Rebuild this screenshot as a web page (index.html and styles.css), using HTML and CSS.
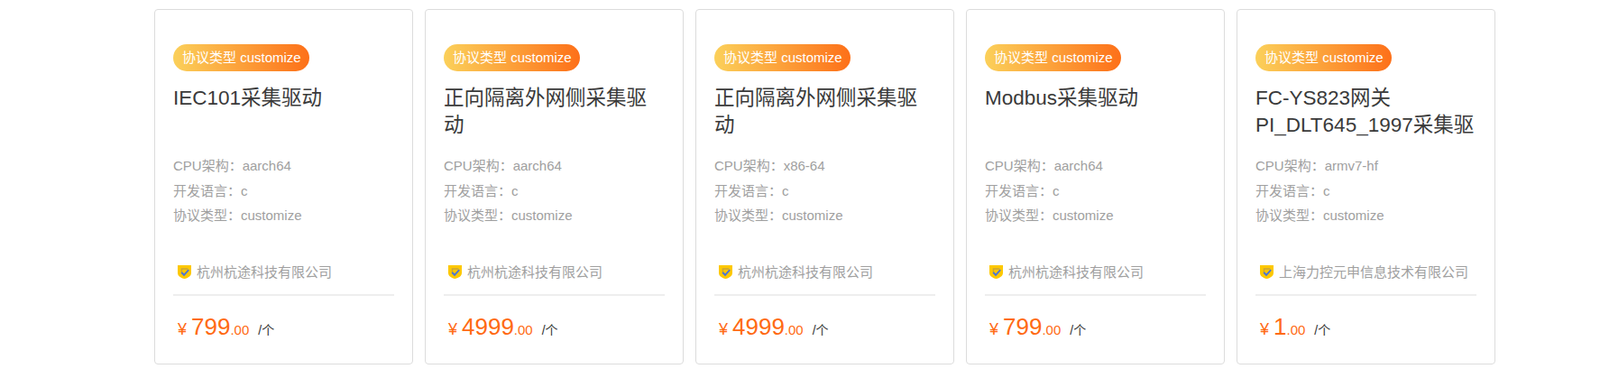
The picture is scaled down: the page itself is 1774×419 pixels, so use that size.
FILE: index.html
```html
<!DOCTYPE html>
<html lang="zh-CN">
<head>
<meta charset="UTF-8">
<title>驱动列表</title>
<link rel="stylesheet" href="styles.css">
</head>
<body>

<svg class="defs" width="0" height="0">
<symbol id="shield" viewBox="0 0 16 16">
<path d="M0 0H16V9C16 13 12 15 8 16C4 15 0 13 0 9Z" fill="#fdc800"/>
<path d="M4 3.5H12V5H5.5V8.5H4Z" fill="#c9a23a"/>
<path d="M4.5 8.5L7.5 11.5L13 5.5" fill="none" stroke="#4a74d8" stroke-width="2"/>
</symbol>
</svg>

<div class="list">

<div class="card">
<span class="tag">协议类型 customize</span>
<h3 class="title">IEC101采集驱动</h3>
<div class="info">
<p>CPU架构：aarch64</p>
<p>开发语言：c</p>
<p>协议类型：customize</p>
</div>
<div class="company"><svg class="shield"><use href="#shield"/></svg>杭州杭途科技有限公司</div>
<div class="price"><span class="yen">¥</span><span class="num">799</span><span class="dec">.00</span><span class="unit">/个</span></div>
</div>

<div class="card">
<span class="tag">协议类型 customize</span>
<h3 class="title">正向隔离外网侧采集驱动</h3>
<div class="info">
<p>CPU架构：aarch64</p>
<p>开发语言：c</p>
<p>协议类型：customize</p>
</div>
<div class="company"><svg class="shield"><use href="#shield"/></svg>杭州杭途科技有限公司</div>
<div class="price"><span class="yen">¥</span><span class="num">4999</span><span class="dec">.00</span><span class="unit">/个</span></div>
</div>

<div class="card">
<span class="tag">协议类型 customize</span>
<h3 class="title">正向隔离外网侧采集驱动</h3>
<div class="info">
<p>CPU架构：x86-64</p>
<p>开发语言：c</p>
<p>协议类型：customize</p>
</div>
<div class="company"><svg class="shield"><use href="#shield"/></svg>杭州杭途科技有限公司</div>
<div class="price"><span class="yen">¥</span><span class="num">4999</span><span class="dec">.00</span><span class="unit">/个</span></div>
</div>

<div class="card">
<span class="tag">协议类型 customize</span>
<h3 class="title">Modbus采集驱动</h3>
<div class="info">
<p>CPU架构：aarch64</p>
<p>开发语言：c</p>
<p>协议类型：customize</p>
</div>
<div class="company"><svg class="shield"><use href="#shield"/></svg>杭州杭途科技有限公司</div>
<div class="price"><span class="yen">¥</span><span class="num">799</span><span class="dec">.00</span><span class="unit">/个</span></div>
</div>

<div class="card">
<span class="tag">协议类型 customize</span>
<h3 class="title">FC-YS823网关 PI_DLT645_1997采集驱</h3>
<div class="info">
<p>CPU架构：armv7-hf</p>
<p>开发语言：c</p>
<p>协议类型：customize</p>
</div>
<div class="company"><svg class="shield"><use href="#shield"/></svg>上海力控元申信息技术有限公司</div>
<div class="price"><span class="yen">¥</span><span class="num">1</span><span class="dec">.00</span><span class="unit">/个</span></div>
</div>

</div>

</body>
</html>
```

FILE: styles.css
```css
body {
margin: 0;
background-color: #fff;
font-family: "Liberation Sans", "Noto Sans CJK SC", sans-serif;
overflow: hidden;
}

.defs {
display: block;
height: 0;
}

.list {
display: flex;
gap: 13px;
padding: 10px 0 0 171px;
}

.card {
box-sizing: border-box;
width: 287px;
height: 394px;
padding: 38px 20px 0;
border: 1px solid #dcdcdc;
border-radius: 4px;
}

.tag {
display: inline-block;
height: 30px;
line-height: 30px;
padding: 0 9.5px 0 10px;
border-radius: 15px;
background: linear-gradient(90deg, #fbd05a, #fd7019);
color: #fff;
font-size: 15px;
}

.title {
height: 60px;
margin: 15px 0 0;
color: #3a3a3a;
font-size: 22.5px;
font-weight: normal;
line-height: 30px;
overflow: hidden;
}

.info {
margin-top: 16px;
color: #a0a0a0;
font-size: 15px;
line-height: 27.5px;
}

.info p {
margin: 0;
}

.company {
display: flex;
align-items: center;
height: 27px;
margin-top: 34px;
padding-left: 5px;
padding-bottom: 12px;
border-bottom: 2px solid #eee;
color: #a0a0a0;
font-size: 15px;
}

.shield {
width: 15px;
height: 15px;
margin: 2px 6px 0 0;
}

.price {
display: flex;
align-items: baseline;
margin-top: 19px;
padding-left: 5px;
color: #ff6a13;
}

.yen {
margin-right: 5px;
font-size: 18px;
}

.num {
font-size: 26px;
}

.dec {
font-size: 15px;
}

.unit {
margin-left: 10px;
color: #333;
font-size: 14px;
}
```
